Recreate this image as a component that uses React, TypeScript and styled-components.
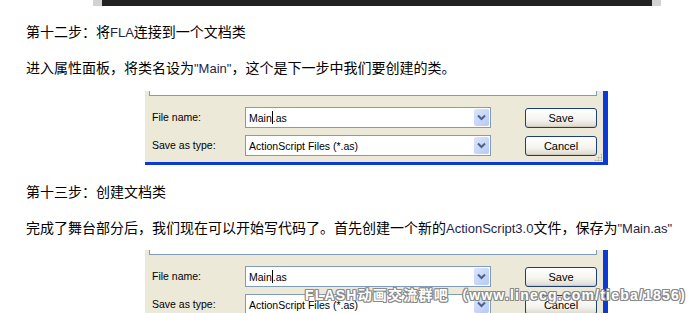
import type React from "react";
import styled, { createGlobalStyle } from "styled-components";

const GlobalStyle = createGlobalStyle`
  html, body {
    margin: 0;
    padding: 0;
    background: #fff;
  }
`;

const Page = styled.div`
  position: relative;
  width: 690px;
  height: 313px;
  overflow: hidden;
  font-family: "Liberation Sans", "Noto Sans CJK SC", sans-serif;
  color: #000;
`;

const TopBar = styled.div`
  margin-left: 93px;
  width: 568px;
  height: 6px;
  padding: 0 9px;
  box-sizing: border-box;
  background: #d3d3d3;
  & > div {
    height: 100%;
    background: #222;
  }
`;

const Article = styled.div`
  padding-left: 26px;
`;

const Line = styled.p<{ $top: number }>`
  margin: ${p => p.$top}px 0 0;
  font-size: 14px;
  line-height: 20px;
  height: 20px;
  white-space: nowrap;
`;

const Latin = styled.span`
  font-size: 13px;
  color: #1f1f4a;
`;

const Dialog = styled.div<{ $top: number }>`
  margin: ${p => p.$top}px 0 0 145px;
  width: 463px;
  box-sizing: border-box;
  background: #ece9d8;
  border-right: 5px solid #0b3ad6;
  border-bottom: 3px solid #0b3ad6;
  padding-bottom: 6px;
  position: relative;
  font-family: "Liberation Sans", sans-serif;
  font-size: 10.5px;
`;

const PanelEdge = styled.div`
  margin: 0 6px 0 4px;
  height: 4px;
  background: #fff;
  border: 1px solid #7f9db9;
  border-top: none;
`;

const Rows = styled.div`
  display: grid;
  grid-template-columns: 93px 246px 106px;
  row-gap: 7px;
  padding: 11px 0 0 7px;
  align-items: center;
`;

const Label = styled.div`
  color: #000;
  padding-bottom: 2px;
`;

const Combo = styled.div`
  height: 21px;
  box-sizing: border-box;
  background: #fff;
  border: 1px solid #7f9db9;
  display: flex;
  align-items: center;
  padding: 0 1px 0 3px;
  color: #000;
`;

const ComboText = styled.span`
  flex: 1;
  white-space: nowrap;
`;

const Caret = styled.span`
  display: inline-block;
  width: 1px;
  height: 13px;
  background: #000;
  vertical-align: -2px;
`;

const DropButton = styled.div`
  width: 15px;
  height: 17px;
  border-radius: 2px;
  background: linear-gradient(135deg, #dbe6fd, #b6c9f6);
  display: flex;
  align-items: center;
  justify-content: center;
`;

const Button = styled.div`
  justify-self: end;
  width: 72px;
  height: 20px;
  box-sizing: border-box;
  border: 1px solid #1c3f78;
  border-radius: 3px;
  background: linear-gradient(#ffffff, #f4f3ee 60%, #dcd8cc);
  box-shadow: inset 0 -1px 0 #cfcabd;
  display: flex;
  align-items: center;
  justify-content: center;
  font-size: 11px;
  color: #000;
`;

const Grip = styled.div`
  position: absolute;
  right: 1px;
  bottom: 1px;
  width: 8px;
  height: 8px;
  background-image: radial-gradient(circle, #b4b0a0 45%, transparent 50%);
  background-size: 3px 3px;
  clip-path: polygon(100% 0, 100% 100%, 0 100%);
`;

const Watermark = styled.div`
  position: absolute;
  left: 305px;
  top: 284px;
  font-family: "Liberation Sans", "Noto Sans CJK SC", sans-serif;
  font-weight: bold;
  font-size: 14px;
  white-space: nowrap;
  color: #fff;
  letter-spacing: 1.2px;
  text-shadow:
    1px 0 0 #8a8a8a, -1px 0 0 #8a8a8a, 0 1px 0 #8a8a8a, 0 -1px 0 #8a8a8a,
    1px 1px 0 #8a8a8a, -1px -1px 0 #8a8a8a, 1px -1px 0 #8a8a8a, -1px 1px 0 #8a8a8a;
`;

const Chevron = () => (
  <svg width="9" height="7" viewBox="0 0 9 7">
    <path d="M1 1.5 L4.5 5 L8 1.5" fill="none" stroke="#4d6185" strokeWidth="2" />
  </svg>
);

const SaveDialog: React.FC<{ top: number }> = ({ top }) => (
  <Dialog $top={top}>
    <PanelEdge />
    <Rows>
      <Label>File name:</Label>
      <Combo>
        <ComboText>
          Main<Caret />.as
        </ComboText>
        <DropButton>
          <Chevron />
        </DropButton>
      </Combo>
      <Button>Save</Button>
      <Label>Save as type:</Label>
      <Combo>
        <ComboText>ActionScript Files (*.as)</ComboText>
        <DropButton>
          <Chevron />
        </DropButton>
      </Combo>
      <Button>Cancel</Button>
    </Rows>
    <Grip />
  </Dialog>
);

const App: React.FC = () => (
  <Page>
    <GlobalStyle />
    <TopBar>
      <div />
    </TopBar>
    <Article>
      <Line $top={16}>
        第十二步：将<Latin>FLA</Latin>连接到一个文档类
      </Line>
      <Line $top={16}>
        进入属性面板，将类名设为<Latin>"Main"</Latin>，这个是下一步中我们要创建的类。
      </Line>
    </Article>
    <SaveDialog top={13} />
    <Article>
      <Line $top={17}>第十三步：创建文档类</Line>
      <Line $top={16}>
        完成了舞台部分后，我们现在可以开始写代码了。首先创建一个新的<Latin>ActionScript3.0</Latin>文件，保存为<Latin>"Main.as"</Latin>
      </Line>
    </Article>
    <SaveDialog top={12} />
    <Watermark>FLASH动画交流群吧 （www.linecg.com/tieba/1856)</Watermark>
  </Page>
);

export default App;
